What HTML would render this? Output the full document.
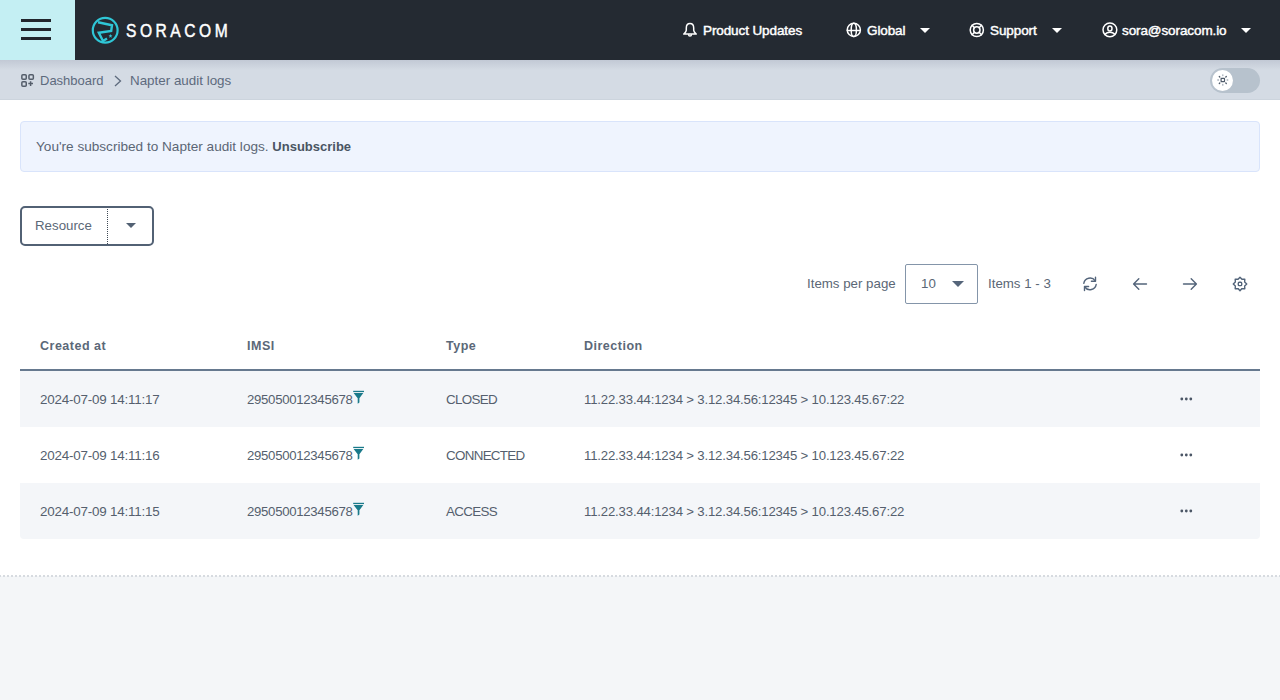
<!DOCTYPE html>
<html><head><meta charset="utf-8">
<style>
*{box-sizing:border-box;margin:0;padding:0}
html,body{width:1280px;height:700px;overflow:hidden;background:#f4f6f8;font-family:"Liberation Sans",sans-serif;color:#5b6776}
.abs{position:absolute}
svg{position:absolute;overflow:visible}
#hdr{position:absolute;left:0;top:0;width:1280px;height:60px;background:#242a32}
#burger{position:absolute;left:0;top:0;width:75px;height:60px;background:#c4eff3}
#burger i{position:absolute;left:21px;width:30px;height:3px;background:#22262d}
#logotext{position:absolute;left:126px;top:20px;font-size:19px;font-weight:normal;color:#fff;letter-spacing:4.3px;-webkit-text-stroke:0.5px #fff;transform-origin:0 0;transform:scaleX(0.82);white-space:nowrap}
.nav{position:absolute;top:22px;font-size:13.5px;font-weight:normal;color:#fff;white-space:nowrap;line-height:18px;letter-spacing:-0.1px;-webkit-text-stroke:0.45px #fff}
.caret{position:absolute;width:0;height:0;border-left:5px solid transparent;border-right:5px solid transparent;border-top:5px solid #fff}
#crumb{position:absolute;left:0;top:60px;width:1280px;height:40px;background:#d4dbe4;border-bottom:1px solid #ccd4dd}
#crumbshadow{position:absolute;left:0;top:60px;width:1280px;height:10px;background:linear-gradient(#c2c9d5,rgba(212,219,228,0))}
.ctext{position:absolute;top:73px;font-size:13px;color:#5d6a7d;line-height:16px;white-space:nowrap}
#main{position:absolute;left:0;top:100px;width:1280px;height:476px;background:#fff}
#dots{position:absolute;left:0;top:575px;width:1280px;height:2px;background-image:linear-gradient(90deg,#d7dbe0 50%,transparent 50%);background-size:4px 2px;background-position:3px 0}
#banner{position:absolute;left:20px;top:121px;width:1240px;height:51px;background:#eff4fe;border:1px solid #d9e4fb;border-radius:4px}
#banner span{position:absolute;left:15px;top:16px;font-size:13.6px;color:#5b6675;white-space:nowrap;line-height:17px}
#banner b{font-size:13px;color:#4a5563}
#resbtn{position:absolute;left:20px;top:206px;width:134px;height:40px;border:2px solid #526174;border-radius:5px}
.pg{position:absolute;top:276px;font-size:13.3px;color:#5b6776;white-space:nowrap;line-height:16px}
#sel{position:absolute;left:905px;top:264px;width:73px;height:40px;border:1px solid #8495a9;border-radius:2px}
.th{position:absolute;top:339px;font-size:12.5px;font-weight:bold;color:#5b6878;letter-spacing:0.5px;white-space:nowrap;line-height:14px}
#thline{position:absolute;left:20px;top:369px;width:1240px;height:2px;background:#66798f}
.row{position:absolute;left:20px;width:1240px;height:56px}
.odd{background:#f4f6f9}
.td{position:absolute;font-size:13.4px;letter-spacing:-0.2px;color:#555f6e;white-space:nowrap;line-height:16px}
.dir{font-size:13.2px;letter-spacing:-0.18px}
.ic{fill:none;stroke:#53647a;stroke-width:1.4;stroke-linecap:round;stroke-linejoin:round}
.wic{fill:none;stroke:#fff;stroke-width:1.5;stroke-linecap:round;stroke-linejoin:round}
</style></head><body>
<div id="main"></div>
<div id="dots"></div>

<div id="hdr"></div>
<div id="burger"><i style="top:19px"></i><i style="top:28px"></i><i style="top:37px"></i></div>
<svg width="1" height="1" style="left:0;top:0">
  <circle cx="105.2" cy="30.3" r="12.4" fill="none" stroke="#2fc6d6" stroke-width="2.2"/>
  <path d="M98,22.3 L112,25.2 L111.2,31 L98.8,32.8 L103,41 L107,38.5" fill="none" stroke="#2fc6d6" stroke-width="2.4" stroke-linejoin="miter"/>
  <path d="M110.5,34 l0.6,1.3 1.4,0.1 -1.1,0.9 0.4,1.4 -1.3,-0.8 -1.3,0.8 0.4,-1.4 -1.1,-0.9 1.4,-0.1z" fill="#2fc6d6"/>
</svg>
<div id="logotext">SORACOM</div>

<!-- bell -->
<svg width="1" height="1" style="left:678px;top:18px">
  <path class="wic" d="M12,5.6 C9.4,5.6 8.3,7.6 8.3,10.1 L8.3,12.3 C8.3,13.8 6.9,15 5.7,16.1 L18.3,16.1 C17.1,15 15.7,13.8 15.7,12.3 L15.7,10.1 C15.7,7.6 14.6,5.6 12,5.6 Z"/>
  <path class="wic" d="M10.6,16.7 A1.4,1.4 0 0 0 13.4,16.7"/>
</svg>
<div class="nav" style="left:703px">Product Updates</div>
<!-- globe -->
<svg width="1" height="1" style="left:842px;top:18px">
  <circle class="wic" cx="11.8" cy="11.9" r="6.6"/>
  <ellipse class="wic" cx="11.8" cy="11.9" rx="2.6" ry="6.6"/>
  <path class="wic" d="M5.3,12.5 H18.3"/>
</svg>
<div class="nav" style="left:867px">Global</div>
<div class="caret" style="left:920px;top:28px"></div>
<!-- support -->
<svg width="1" height="1" style="left:964px;top:18px">
  <circle class="wic" cx="12.8" cy="12" r="6.6"/>
  <circle class="wic" cx="12.8" cy="12" r="3.2"/>
  <path class="wic" d="M8.1,7.3 L10.5,9.7 M17.5,7.3 L15.1,9.7 M8.1,16.7 L10.5,14.3 M17.5,16.7 L15.1,14.3"/>
</svg>
<div class="nav" style="left:990px">Support</div>
<div class="caret" style="left:1052px;top:28px"></div>
<!-- user -->
<svg width="1" height="1" style="left:1097px;top:18px">
  <circle class="wic" cx="12.9" cy="11.8" r="6.9"/>
  <ellipse class="wic" cx="12.9" cy="10.4" rx="2.1" ry="2.5"/>
  <path class="wic" d="M7.9,16.4 C9.5,14.8 11,14.3 12.9,14.3 C14.8,14.3 16.3,14.8 17.9,16.4"/>
</svg>
<div class="nav" style="left:1122px">sora@soracom.io</div>
<div class="caret" style="left:1241px;top:28px"></div>

<div id="crumb"></div>
<div id="crumbshadow"></div>
<svg width="1" height="1" style="left:0;top:0">
  <g fill="none" stroke="#555e6b" stroke-width="1.5">
    <rect x="21.85" y="74.75" width="4.4" height="4.4" rx="1"/>
    <rect x="28.95" y="74.75" width="4.4" height="4.4" rx="1"/>
    <rect x="21.85" y="81.85" width="4.4" height="4.4" rx="1"/>
    <path d="M30.6,81.3 V86 M28.3,83.6 H33"/>
  </g>
  <path d="M115,76 L120.5,81 L115,86" fill="none" stroke="#5d6a7d" stroke-width="1.3"/>
</svg>
<div class="ctext" style="left:40px">Dashboard</div>
<div class="ctext" style="left:130px;font-size:13.4px">Napter audit logs</div>

<!-- toggle -->
<div class="abs" style="left:1210px;top:68px;width:50px;height:25px;border-radius:12.5px;background:#b7c2cd"></div>
<div class="abs" style="left:1212px;top:70px;width:21px;height:21px;border-radius:50%;background:#fff"></div>
<svg width="1" height="1" style="left:1210px;top:68px">
  <rect x="11.1" y="10.3" width="3.4" height="3.4" rx="0.4" fill="none" stroke="#4f5b6a" stroke-width="1.2"/>
  <g stroke="#4f5b6a" stroke-width="1.3" stroke-linecap="round">
    <path d="M9.3,8.5 L9.8,9 M16.3,8.5 L15.8,9 M9.3,15.5 L9.8,15 M16.3,15.5 L15.8,15"/>
  </g>
  <g stroke="#a3adb8" stroke-width="1.3" stroke-linecap="round">
    <path d="M12.8,6.8 V7.5 M12.8,16.5 V17.2 M7.8,12 H8.5 M17.1,12 H17.8"/>
  </g>
</svg>

<div id="banner"><span>You're subscribed to Napter audit logs. <b>Unsubscribe</b></span></div>

<div id="resbtn"></div>
<div class="abs" style="left:35px;top:218px;font-size:13.3px;color:#5b6877;line-height:16px">Resource</div>
<div class="abs" style="left:107px;top:209px;width:1px;height:35px;border-left:1px dotted #3f4955"></div>
<div class="caret" style="left:126px;top:223px;border-top-color:#526173"></div>

<div class="pg" style="left:807px">Items per page</div>
<div id="sel"></div>
<div class="pg" style="left:921px;top:276px">10</div>
<div class="caret" style="left:952px;top:281px;border-left-width:6px;border-right-width:6px;border-top:6px solid #55657a"></div>
<div class="pg" style="left:988px">Items 1 - 3</div>

<!-- refresh -->
<svg width="1" height="1" style="left:1078px;top:272px">
  <path class="ic" d="M5.8,11.3 A6.3,6.3 0 0 1 17.2,8.8"/>
  <path class="ic" d="M17.5,5.2 V9.2 H13.4"/>
  <path class="ic" d="M18.2,12.4 A6.3,6.3 0 0 1 6.8,15"/>
  <path class="ic" d="M6.5,18.5 V14.5 H10.6"/>
</svg>
<!-- left arrow -->
<svg width="1" height="1" style="left:1128px;top:272px">
  <path class="ic" d="M18.5,12 H5.8 M10.8,6.8 L5.6,12 L10.8,17.2"/>
</svg>
<!-- right arrow -->
<svg width="1" height="1" style="left:1178px;top:272px">
  <path class="ic" d="M5.5,12 H18.2 M13.2,6.8 L18.4,12 L13.2,17.2"/>
</svg>
<!-- gear -->
<svg width="1" height="1" style="left:1228px;top:272px">
  <path class="ic" d="M12.00,5.2 L13.95,7.3 L16.8,7.15 L16.65,10 L18.75,11.95 L16.65,13.9 L16.8,16.75 L13.95,16.6 L12.00,18.7 L10.05,16.6 L7.2,16.75 L7.35,13.9 L5.25,11.95 L7.35,10 L7.2,7.15 L10.05,7.3 Z"/>
  <rect class="ic" x="10.3" y="10.25" width="3.4" height="3.4" rx="1"/>
</svg>

<div class="th" style="left:40px">Created at</div>
<div class="th" style="left:247px">IMSI</div>
<div class="th" style="left:446px">Type</div>
<div class="th" style="left:584px">Direction</div>
<div id="thline"></div>

<div class="row odd" style="top:371px"></div>
<div class="row" style="top:427px"></div>
<div class="row odd" style="top:483px;border-radius:0 0 4px 4px"></div>

<div class="td" style="left:40px;top:392px">2024-07-09 14:11:17</div>
<div class="td" style="left:247px;top:392px;font-size:13.2px;letter-spacing:-0.3px">295050012345678</div>
<div class="td" style="left:446px;top:392px;letter-spacing:-0.7px">CLOSED</div>
<div class="td dir" style="left:584px;top:392px">11.22.33.44:1234 &gt; 3.12.34.56:12345 &gt; 10.123.45.67:22</div>

<div class="td" style="left:40px;top:448px">2024-07-09 14:11:16</div>
<div class="td" style="left:247px;top:448px;font-size:13.2px;letter-spacing:-0.3px">295050012345678</div>
<div class="td" style="left:446px;top:448px;letter-spacing:-0.7px">CONNECTED</div>
<div class="td dir" style="left:584px;top:448px">11.22.33.44:1234 &gt; 3.12.34.56:12345 &gt; 10.123.45.67:22</div>

<div class="td" style="left:40px;top:504px">2024-07-09 14:11:15</div>
<div class="td" style="left:247px;top:504px;font-size:13.2px;letter-spacing:-0.3px">295050012345678</div>
<div class="td" style="left:446px;top:504px;letter-spacing:-0.7px">ACCESS</div>
<div class="td dir" style="left:584px;top:504px">11.22.33.44:1234 &gt; 3.12.34.56:12345 &gt; 10.123.45.67:22</div>

<svg width="1" height="1" style="left:0;top:0">
  <g id="filt" fill="#1a7a8a">
    <rect x="353.2" y="390.8" width="10.8" height="1.3"/>
    <path d="M353.6,393 H363.3 L359.4,398.3 V402.6 L357.7,403.8 V398.3 Z"/>
  </g>
  <use href="#filt" y="56"/>
  <use href="#filt" y="112"/>
  <g id="ell" fill="#4a5565">
    <circle cx="1181.8" cy="399" r="1.4"/>
    <circle cx="1186.3" cy="399" r="1.4"/>
    <circle cx="1190.8" cy="399" r="1.4"/>
  </g>
  <use href="#ell" y="56"/>
  <use href="#ell" y="112"/>
</svg>

</body></html>
